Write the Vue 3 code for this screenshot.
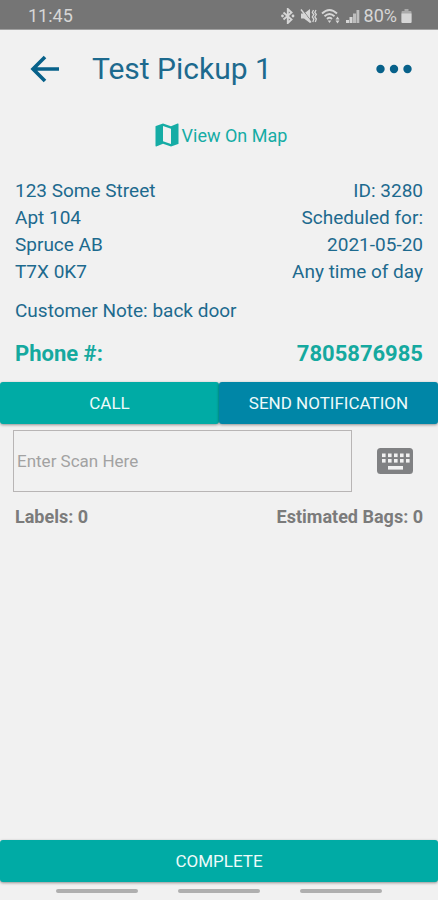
<script setup>
import { ref } from 'vue'

const address = ['123 Some Street', 'Apt 104', 'Spruce AB', 'T7X 0K7']
const schedule = ['ID: 3280', 'Scheduled for:', '2021-05-20', 'Any time of day']
const scan = ref('')
const keyColumns = [5, 11, 17, 23, 29]
</script>

<template>
  <div class="screen">
    <div class="status">
      <span>11:45</span>
      <div class="status-right">
        <svg width="16" height="16" viewBox="0 0 16 16" aria-hidden="true">
          <path d="M3.500 4.500l8 7L7.800 15V1l3.700 3.500-8 7" fill="none" stroke="currentColor" stroke-width="1.900" />
          <circle cx="2.500" cy="8" r="1.400" fill="currentColor" />
          <circle cx="13" cy="8" r="1.400" fill="currentColor" />
        </svg>
        <svg width="17" height="16" viewBox="0 0 17 16" aria-hidden="true">
          <path d="M1 5.500h3L10 1v14l-6-4.500H1z" fill="currentColor" />
          <path d="M2 1l9 12" stroke="#757575" stroke-width="1" />
          <path d="M1 1.500l10 13" stroke="currentColor" stroke-width="1.400" />
          <path d="M13.500 2l-1.200 2.500 1.500 2-1.500 2.500 1.500 2-1 3M16 2l-1.200 2.500 1.500 2-1.500 2.500 1.500 2-1 3" fill="none" stroke="currentColor" stroke-width="1.300" />
        </svg>
        <svg width="20" height="16" viewBox="0 0 20 16" aria-hidden="true">
          <path d="M1 5.500q7.500-7 15 0M3.500 8.300q5-4.500 10 0M6 11q2.500-2.300 5 0" fill="none" stroke="currentColor" stroke-width="1.900" />
          <path d="M8.500 15l-1.800-2.500h3.600zM14.500 11.500l2-3 2 3zM14.500 12.500h4l-2 3z" fill="currentColor" />
        </svg>
        <svg width="15" height="16" viewBox="0 0 15 16" aria-hidden="true">
          <path d="M1 12h3v3H1zM4.500 9h3v6h-3z" fill="currentColor" />
          <path d="M8 5.500h3V15H8zM11.500 2h2.800v13h-2.800z" fill="currentColor" opacity=".75" />
        </svg>
        <span>80%</span>
        <svg width="11" height="16" viewBox="0 0 11 16" aria-hidden="true">
          <path d="M3.500 1h4v2h2q1 0 1 1v10q0 1-1 1h-8q-1 0-1-1V4q0-1 1-1h2z" fill="#aaa" />
          <path d="M.5 5.500h10V14q0 1-1 1h-8q-1 0-1-1z" fill="currentColor" />
        </svg>
      </div>
    </div>

    <header class="header">
      <button class="icon-button" type="button" aria-label="Back">
        <svg width="30" height="28" viewBox="0 0 30 28" aria-hidden="true">
          <path d="M15 2L3 14l12 12M3 14h26" fill="none" stroke="currentColor" stroke-width="3.600" />
        </svg>
      </button>
      <h1>Test Pickup 1</h1>
      <button class="icon-button" type="button" aria-label="More options">
        <svg width="36" height="10" viewBox="0 0 36 10" aria-hidden="true">
          <circle cx="4.500" cy="5" r="4.200" fill="currentColor" />
          <circle cx="18" cy="5" r="4.200" fill="currentColor" />
          <circle cx="31.500" cy="5" r="4.200" fill="currentColor" />
        </svg>
      </button>
    </header>

    <main class="content">
      <a class="map-link" href="#map">
        <svg width="24" height="24" viewBox="0 0 24 24" aria-hidden="true">
          <path fill-rule="evenodd" d="M23 .5l-.4.100L16 3.200 8 .5.900 2.900Q.500 3 .500 3.500v19.300q0 .7.700.6L8 20.800l8 2.700 7.100-2.400q.4-.1.400-.6V1.100Q23.500.5 23 .5zM16 21l-8-2.800V3l8 2.800z" fill="currentColor" />
        </svg>
        <span>View On Map</span>
      </a>

      <section class="details">
        <div>
          <div v-for="line in address" :key="line">{{ line }}</div>
        </div>
        <div class="right">
          <div v-for="line in schedule" :key="line">{{ line }}</div>
        </div>
      </section>
      <p class="note">Customer Note: back door</p>
      <div class="phone">
        <span>Phone #:</span>
        <span>7805876985</span>
      </div>

      <div class="actions">
        <button class="action" type="button">CALL</button>
        <button class="action blue" type="button">SEND NOTIFICATION</button>
      </div>

      <div class="scan-row">
        <input v-model="scan" class="scan" type="text" placeholder="Enter Scan Here" aria-label="Enter Scan Here" />
        <button class="keyboard" type="button" aria-label="Show keyboard">
          <svg width="36" height="26" viewBox="0 0 36 26" aria-hidden="true">
            <rect width="36" height="26" rx="3.500" fill="#808183" />
            <g fill="#f1f1f1">
              <template v-for="x in keyColumns" :key="x">
                <rect :x="x" y="5.500" width="3.600" height="3.600" />
                <rect :x="x" y="11" width="3.600" height="3.600" />
              </template>
              <rect x="11" y="18" width="15" height="3.600" />
            </g>
          </svg>
        </button>
      </div>

      <div class="totals">
        <span>Labels: 0</span>
        <span>Estimated Bags: 0</span>
      </div>
    </main>

    <footer>
      <button class="action complete" type="button">COMPLETE</button>
      <div class="nav">
        <span v-for="n in 3" :key="n" class="pill"></span>
      </div>
    </footer>
  </div>
</template>

<style>
body {
  margin: 0;
  background: #f1f1f1;
}
</style>

<style scoped>
.screen {
  display: flex;
  flex-direction: column;
  min-height: 100vh;
  background: #f1f1f1;
  color: #1d6a8e;
  font-family: Roboto, "Liberation Sans", sans-serif;
  font-size: 19px;
  line-height: 27px;
}
button {
  padding: 0;
  border: 0;
  background: none;
  color: inherit;
  font-family: inherit;
  cursor: pointer;
}
svg {
  display: block;
}
.status {
  display: flex;
  align-items: center;
  justify-content: space-between;
  box-sizing: border-box;
  height: 30px;
  padding: 2px 26px 0 28px;
  background: #757575;
  border-bottom: 1px solid #a0a0a0;
  color: #d6d6d6;
  font-size: 18px;
}
.status-right {
  display: flex;
  align-items: center;
  gap: 4px;
}
.header {
  display: flex;
  align-items: center;
  height: 78px;
  padding: 0 26px 0 30px;
  color: #07618a;
}
h1 {
  flex: 1;
  margin: 0;
  padding-left: 32px;
  color: #1d6a8e;
  font-size: 30px;
  font-weight: 400;
  line-height: 40px;
}
.content {
  flex: 1;
}
.map-link {
  display: flex;
  justify-content: center;
  align-items: center;
  gap: 3px;
  height: 54px;
  padding-left: 4px;
  color: #15aca5;
  font-size: 18px;
  text-decoration: none;
}
.details,
.phone,
.totals {
  display: flex;
  justify-content: space-between;
  padding: 0 15px;
}
.details {
  padding-top: 15px;
}
.right {
  text-align: right;
}
.note {
  margin: 0;
  padding: 12px 15px 0;
}
.phone {
  padding-top: 16px;
  padding-bottom: 15px;
  color: #15a99f;
  font-size: 22px;
  font-weight: 700;
}
.actions {
  display: flex;
}
.action {
  flex: 1;
  height: 42px;
  border-radius: 3px;
  background: #00aba5;
  box-shadow: 0 1px 3px rgba(0, 0, 0, 0.4);
  color: #eefafa;
  font-size: 17px;
}
.blue {
  background: #0086a7;
}
.scan-row {
  display: flex;
  align-items: center;
  padding: 6px 25px 0 13px;
}
.scan {
  flex: 1;
  min-width: 0;
  box-sizing: border-box;
  height: 62px;
  margin-right: 25px;
  padding: 0 3px;
  border: 1px solid #b8b5b5;
  border-radius: 0;
  background: transparent;
  color: #555;
  font-family: inherit;
  font-size: 17px;
}
.scan::placeholder {
  color: #a2a2a2;
  opacity: 1;
}
.totals {
  padding-top: 11px;
  color: #7b7b7b;
  font-size: 18px;
  font-weight: 700;
}
.complete {
  display: block;
  width: 100%;
}
.nav {
  display: flex;
  justify-content: center;
  gap: 40px;
  padding: 7px 0;
}
.pill {
  width: 82px;
  height: 4px;
  border-radius: 2px;
  background: #afafaf;
}
</style>
